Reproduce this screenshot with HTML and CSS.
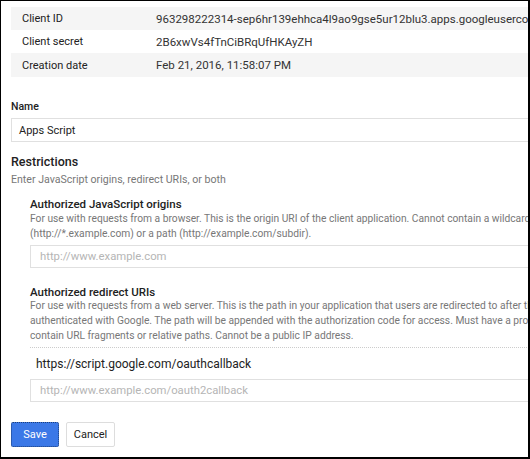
FILE: index.html
```html
<!DOCTYPE html>
<html>
<head>
<meta charset="utf-8">
<link rel="stylesheet" href="styles.css">
</head>
<body>
<div class="frame">
  <div class="content">
    <div class="info">
      <div class="row shade"><span class="key">Client ID</span><span class="val">963298222314-sep6hr139ehhca4l9ao9gse5ur12blu3.apps.googleusercontent.com</span></div>
      <div class="row"><span class="key">Client secret</span><span class="val">2B6xwVs4fTnCiBRqUfHKAyZH</span></div>
      <div class="row shade tall"><span class="key">Creation date</span><span class="val">Feb 21, 2016, 11:58:07 PM</span></div>
    </div>

    <div class="label name-label">Name</div>
    <div class="field name-field">Apps Script</div>

    <div class="heading">Restrictions</div>
    <div class="sub">Enter JavaScript origins, redirect URIs, or both</div>

    <div class="section">
      <div class="label sec-title">Authorized JavaScript origins</div>
      <div class="desc">For use with requests from a browser. This is the origin URI of the client application. Cannot contain a wildcard<br>(http://*.example.com) or a path (http://example.com/subdir).</div>
      <div class="field ph origin-field">http://www.example.com</div>

      <div class="label sec-title redirect-title">Authorized redirect URIs</div>
      <div class="desc desc-redirect">For use with requests from a web server. This is the path in your application that users are redirected to after they have<br>authenticated with Google. The path will be appended with the authorization code for access. Must have a protocol. Cannot<br>contain URL fragments or relative paths. Cannot be a public IP address.</div>
      <div class="uri-row">https://script.google.com/oauthcallback</div>
      <div class="field ph uri-field">http://www.example.com/oauth2callback</div>
    </div>

    <div class="actions">
      <button class="btn btn-save">Save</button>
      <button class="btn btn-cancel">Cancel</button>
    </div>
  </div>
</div>
</body>
</html>
```

FILE: styles.css
```css
html, body {
  margin: 0;
  padding: 0;
  background: #fff;
}

.frame {
  box-sizing: border-box;
  width: 530px;
  height: 459px;
  border-top: 1px solid #000;
  border-left: 1px solid #000;
  border-right: 2px solid #000;
  border-bottom: 2px solid #000;
  overflow: hidden;
  font-family: Roboto, "Liberation Sans", Arial, sans-serif;
  color: #222;
}

.content {
  padding: 6px 0 0 10px;
  width: 640px;
}

.info {
  display: flex;
  flex-direction: column;
}

.row {
  display: flex;
  align-items: center;
  height: 23px;
  font-size: 11px;
  white-space: nowrap;
}

.row.tall {
  height: 24px;
}

.shade {
  background: #f5f5f5;
}

.key {
  width: 134px;
  padding-left: 11px;
  flex: none;
  color: #222;
}

.val {
  color: #333;
  font-size: 11.5px;
}

.label {
  font-size: 11.5px;
  line-height: 14px;
  font-weight: 500;
  color: #222;
}

.name-label {
  margin-top: 23px;
  font-size: 10.5px;
}

.field {
  box-sizing: border-box;
  margin-top: 4px;
  height: 24px;
  border: 1px solid #e0e0e0;
  padding-left: 7px;
  display: flex;
  align-items: center;
  font-size: 11px;
  color: #222;
}

.name-field {
  width: 640px;
}

.heading {
  margin-top: 12px;
  font-size: 12.5px;
  line-height: 16px;
  font-weight: 500;
  color: #222;
}

.sub {
  margin-top: 3px;
  font-size: 10.6px;
  line-height: 14px;
  color: #777;
}

.section {
  padding-left: 19px;
}

.sec-title {
  margin-top: 10px;
}

.desc {
  font-size: 10.25px;
  line-height: 15px;
  color: #777;
  white-space: nowrap;
}

.ph {
  color: #b5b5b5;
  padding-left: 9px;
  height: 23px;
  font-size: 11.3px;
}

.origin-field {
  margin-top: 4px;
}

.redirect-title {
  margin-top: 17px;
}

.desc-redirect {
  margin-top: -1px;
}

.uri-row {
  margin-top: 4px;
  height: 31px;
  border-top: 1px dotted #ccc;
  display: flex;
  align-items: center;
  padding-left: 6px;
  font-size: 12px;
  color: #222;
}

.uri-field {
  margin-top: 0;
}

.actions {
  margin-top: 20px;
  display: flex;
  gap: 7px;
}

.btn {
  box-sizing: border-box;
  height: 25px;
  font-family: Roboto, "Liberation Sans", Arial, sans-serif;
  font-size: 11px;
  border-radius: 2px;
  padding: 0;
  cursor: pointer;
}

.btn-save {
  width: 48px;
  background: #3b78e7;
  color: #fff;
  border: 1px dotted #1c3f7a;
}

.btn-cancel {
  width: 49px;
  background: #fff;
  color: #222;
  border: 1px solid #ddd;
}
```
